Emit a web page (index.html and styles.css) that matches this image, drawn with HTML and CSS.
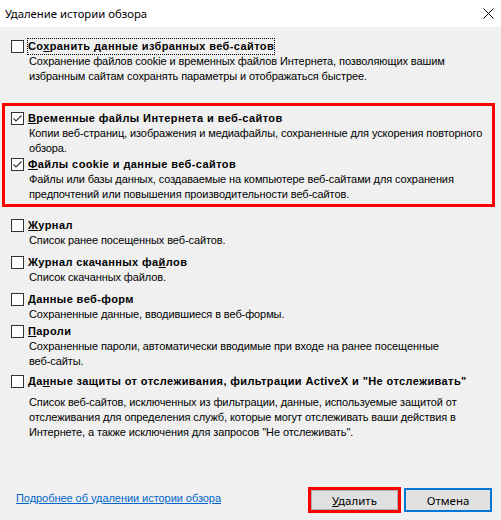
FILE: index.html
```html
<html>
<head>
  <meta charset="utf-8">
  <title>Удаление истории обзора</title>
  <link rel="stylesheet" href="styles.css">
</head>
<body>
  <div class="dialog">
    <div class="titlebar">
      <span class="title">Удаление истории обзора</span>
      <svg class="close" width="11" height="11" viewBox="0 0 11 11">
        <path d="M0.5 0.5 L10.5 10.5 M10.5 0.5 L0.5 10.5" stroke="#000" stroke-width="1" fill="none"/>
      </svg>
    </div>

    <div class="content">
      <div class="option">
        <div class="option-head">
          <span class="box"></span>
          <span class="label focused">Со<u>х</u>ранить данные избранных веб-сайтов</span>
        </div>
        <div class="desc">Сохранение файлов cookie и временных файлов Интернета, позволяющих вашим<br>избранным сайтам сохранять параметры и отображаться быстрее.</div>
      </div>

      <!-- выделенная группа -->
      <div class="highlight">
        <div class="option">
          <div class="option-head">
            <span class="box checked"><svg width="11" height="11" viewBox="0 0 11 11"><path d="M1.5 5.5 L4 8 L9.5 2.5" stroke="#333" stroke-width="1.1" fill="none"/></svg></span>
            <span class="label"><u>В</u>ременные файлы Интернета и веб-сайтов</span>
          </div>
          <div class="desc">Копии веб-страниц, изображения и медиафайлы, сохраненные для ускорения повторного<br>обзора.</div>
        </div>
        <div class="option gap-1">
          <div class="option-head">
            <span class="box checked"><svg width="11" height="11" viewBox="0 0 11 11"><path d="M1.5 5.5 L4 8 L9.5 2.5" stroke="#333" stroke-width="1.1" fill="none"/></svg></span>
            <span class="label"><u>Ф</u>айлы cookie и данные веб-сайтов</span>
          </div>
          <div class="desc">Файлы или базы данных, создаваемые на компьютере веб-сайтами для сохранения<br>предпочтений или повышения производительности веб-сайтов.</div>
        </div>
      </div>

      <div class="option gap-11">
        <div class="option-head">
          <span class="box"></span>
          <span class="label"><u>Ж</u>урнал</span>
        </div>
        <div class="desc">Список ранее посещенных веб-сайтов.</div>
      </div>
      <div class="option gap-7">
        <div class="option-head">
          <span class="box"></span>
          <span class="label">Журнал скачанных фа<u>й</u>лов</span>
        </div>
        <div class="desc">Список скачанных файлов.</div>
      </div>
      <div class="option gap-7">
        <div class="option-head">
          <span class="box"></span>
          <span class="label"><u>Д</u>анные веб-форм</span>
        </div>
        <div class="desc">Сохраненные данные, вводившиеся в веб-формы.</div>
      </div>
      <div class="option gap-2">
        <div class="option-head">
          <span class="box"></span>
          <span class="label"><u>П</u>ароли</span>
        </div>
        <div class="desc">Сохраненные пароли, автоматически вводимые при входе на ранее посещенные<br>веб-сайты.</div>
      </div>
      <div class="option gap-5">
        <div class="option-head">
          <span class="box"></span>
          <span class="label">Да<u>н</u>ные защиты от отслеживания, фильтрации ActiveX и "Не отслеживать"</span>
        </div>
        <div class="desc spaced">Список веб-сайтов, исключенных из фильтрации, данные, используемые защитой от<br>отслеживания для определения служб, которые могут отслеживать ваши действия в<br>Интернете, а также исключения для запросов "Не отслеживать".</div>
      </div>
    </div>

    <div class="footer">
      <a class="more-link" href="#">Подробнее об удалении истории обзора</a>
      <div class="marked">
        <button class="btn"><u>У</u>далить</button>
      </div>
      <button class="btn default">Отмена</button>
    </div>
  </div>
</body>
</html>
```

FILE: styles.css
```css
html, body {
  margin: 0;
  padding: 0;
  background: #f0f0f0;
}

.dialog {
  width: 501px;
  height: 520px;
  background: #f0f0f0;
  display: flex;
  flex-direction: column;
  font-family: "Liberation Sans", Arial, sans-serif;
  font-size: 11px;
  color: #000;
}

.titlebar {
  height: 27px;
  flex: none;
  background: #fff;
  display: flex;
  align-items: center;
  justify-content: space-between;
  padding: 0 7px 0 5px;
}

.title {
  font-family: "Noto Sans", sans-serif;
  font-size: 11.3px;
}

.close {
  display: block;
}

.content {
  padding: 12px 6px 0 11px;
}

.option-head {
  display: flex;
  align-items: center;
  height: 15px;
  line-height: 15px;
}

.box {
  width: 13px;
  height: 13px;
  box-sizing: border-box;
  border: 1px solid #333;
  background: #fff;
  flex: none;
  display: flex;
  align-items: center;
  justify-content: center;
}

.box svg {
  display: block;
}

.label {
  margin-left: 4px;
  font-weight: bold;
  letter-spacing: 0.4px;
  white-space: nowrap;
}

.focused {
  outline: 1px dotted #000;
}

.desc {
  padding-left: 18px;
  line-height: 15px;
  letter-spacing: -0.1px;
  white-space: nowrap;
}

.desc.spaced {
  margin-top: 6px;
}

.highlight {
  border: 3px solid #f00;
  margin: 19px 0 0 -9px;
  padding: 5px 0 2px 6px;
}

.gap-1 { margin-top: 1px; }
.gap-2 { margin-top: 2px; }
.gap-5 { margin-top: 5px; }
.gap-7 { margin-top: 7px; }
.gap-11 { margin-top: 11px; }

.footer {
  margin-top: auto;
  display: flex;
  align-items: center;
  padding: 0 9px 7px 16px;
}

.more-link {
  flex: 1;
  color: #0066cc;
  text-decoration: underline;
  letter-spacing: -0.05px;
  margin-top: -5px;
}

.marked {
  border: 3px solid #f00;
  display: flex;
}

.btn {
  width: 87px;
  height: 20px;
  margin: 0;
  padding: 0;
  border: 1px solid #adadad;
  background: #e1e1e1;
  font-family: "Noto Sans", sans-serif;
  font-size: 11.5px;
  color: #000;
}

.btn.default {
  width: 88px;
  height: 24px;
  margin-left: 3px;
  border: 2px solid #0078d7;
}
```
